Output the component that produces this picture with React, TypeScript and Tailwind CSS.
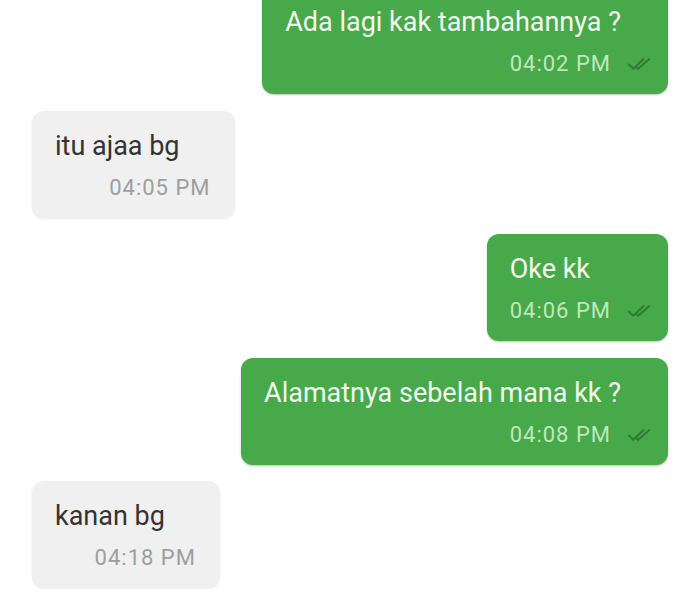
import React from "react";

function Check() {
  return (
    <svg width="26" height="16" viewBox="0 0 26 16" fill="none" stroke="#2e7d32" strokeWidth="2.1" strokeLinecap="round" strokeLinejoin="round">
      <path d="M2 8.5 L6.5 13 L17 3" />
      <path d="M10 11.5 L11.5 13 L23 3" />
    </svg>
  );
}

function Out({ text, time, className = "" }: { text: string; time: string; className?: string }) {
  return (
    <div className={"self-end mr-[32px] rounded-[12px] bg-[#48a94b] pl-[23px] pr-[16px] pt-[19px] pb-[18px] shadow-[0_1px_2px_rgba(0,0,0,0.25)] " + className}>
      <div className="mr-[31px] text-[27px] leading-[32px] text-[#f2faef]">{text}</div>
      <div className="mt-[14px] flex items-center justify-end h-[24px]">
        <span className="text-[22px] tracking-[1px] leading-[24px] text-[#bfe8bb]">{time}</span>
        <span className="ml-[16px] w-[25px] flex items-center"><Check /></span>
      </div>
    </div>
  );
}

function In({ text, time }: { text: string; time: string }) {
  return (
    <div className="self-start ml-[32px] rounded-[12px] bg-[#f0f0f0] pl-[23px] pr-[24px] pt-[19px] pb-[18px] shadow-[0_1px_2px_rgba(0,0,0,0.08)]">
      <div className="mr-[31px] text-[27px] leading-[32px] text-[#333333]">{text}</div>
      <div className="mt-[14px] flex items-center justify-end h-[24px]">
        <span className="text-[22px] tracking-[1px] leading-[24px] text-[#9e9e9e]">{time}</span>
      </div>
    </div>
  );
}

export default function App() {
  return (
    <div className="w-[700px] h-[597px] overflow-hidden bg-white flex flex-col gap-[16.5px]" style={{ fontFamily: "Roboto, 'Liberation Sans', sans-serif" }}>
      <Out text="Ada lagi kak tambahannya ?" time="04:02 PM" className="-mt-[13px]" />
      <In text="itu ajaa bg" time="04:05 PM" />
      <Out text="Oke kk" time="04:06 PM" />
      <Out text="Alamatnya sebelah mana kk ?" time="04:08 PM" />
      <In text="kanan bg" time="04:18 PM" />
    </div>
  );
}
